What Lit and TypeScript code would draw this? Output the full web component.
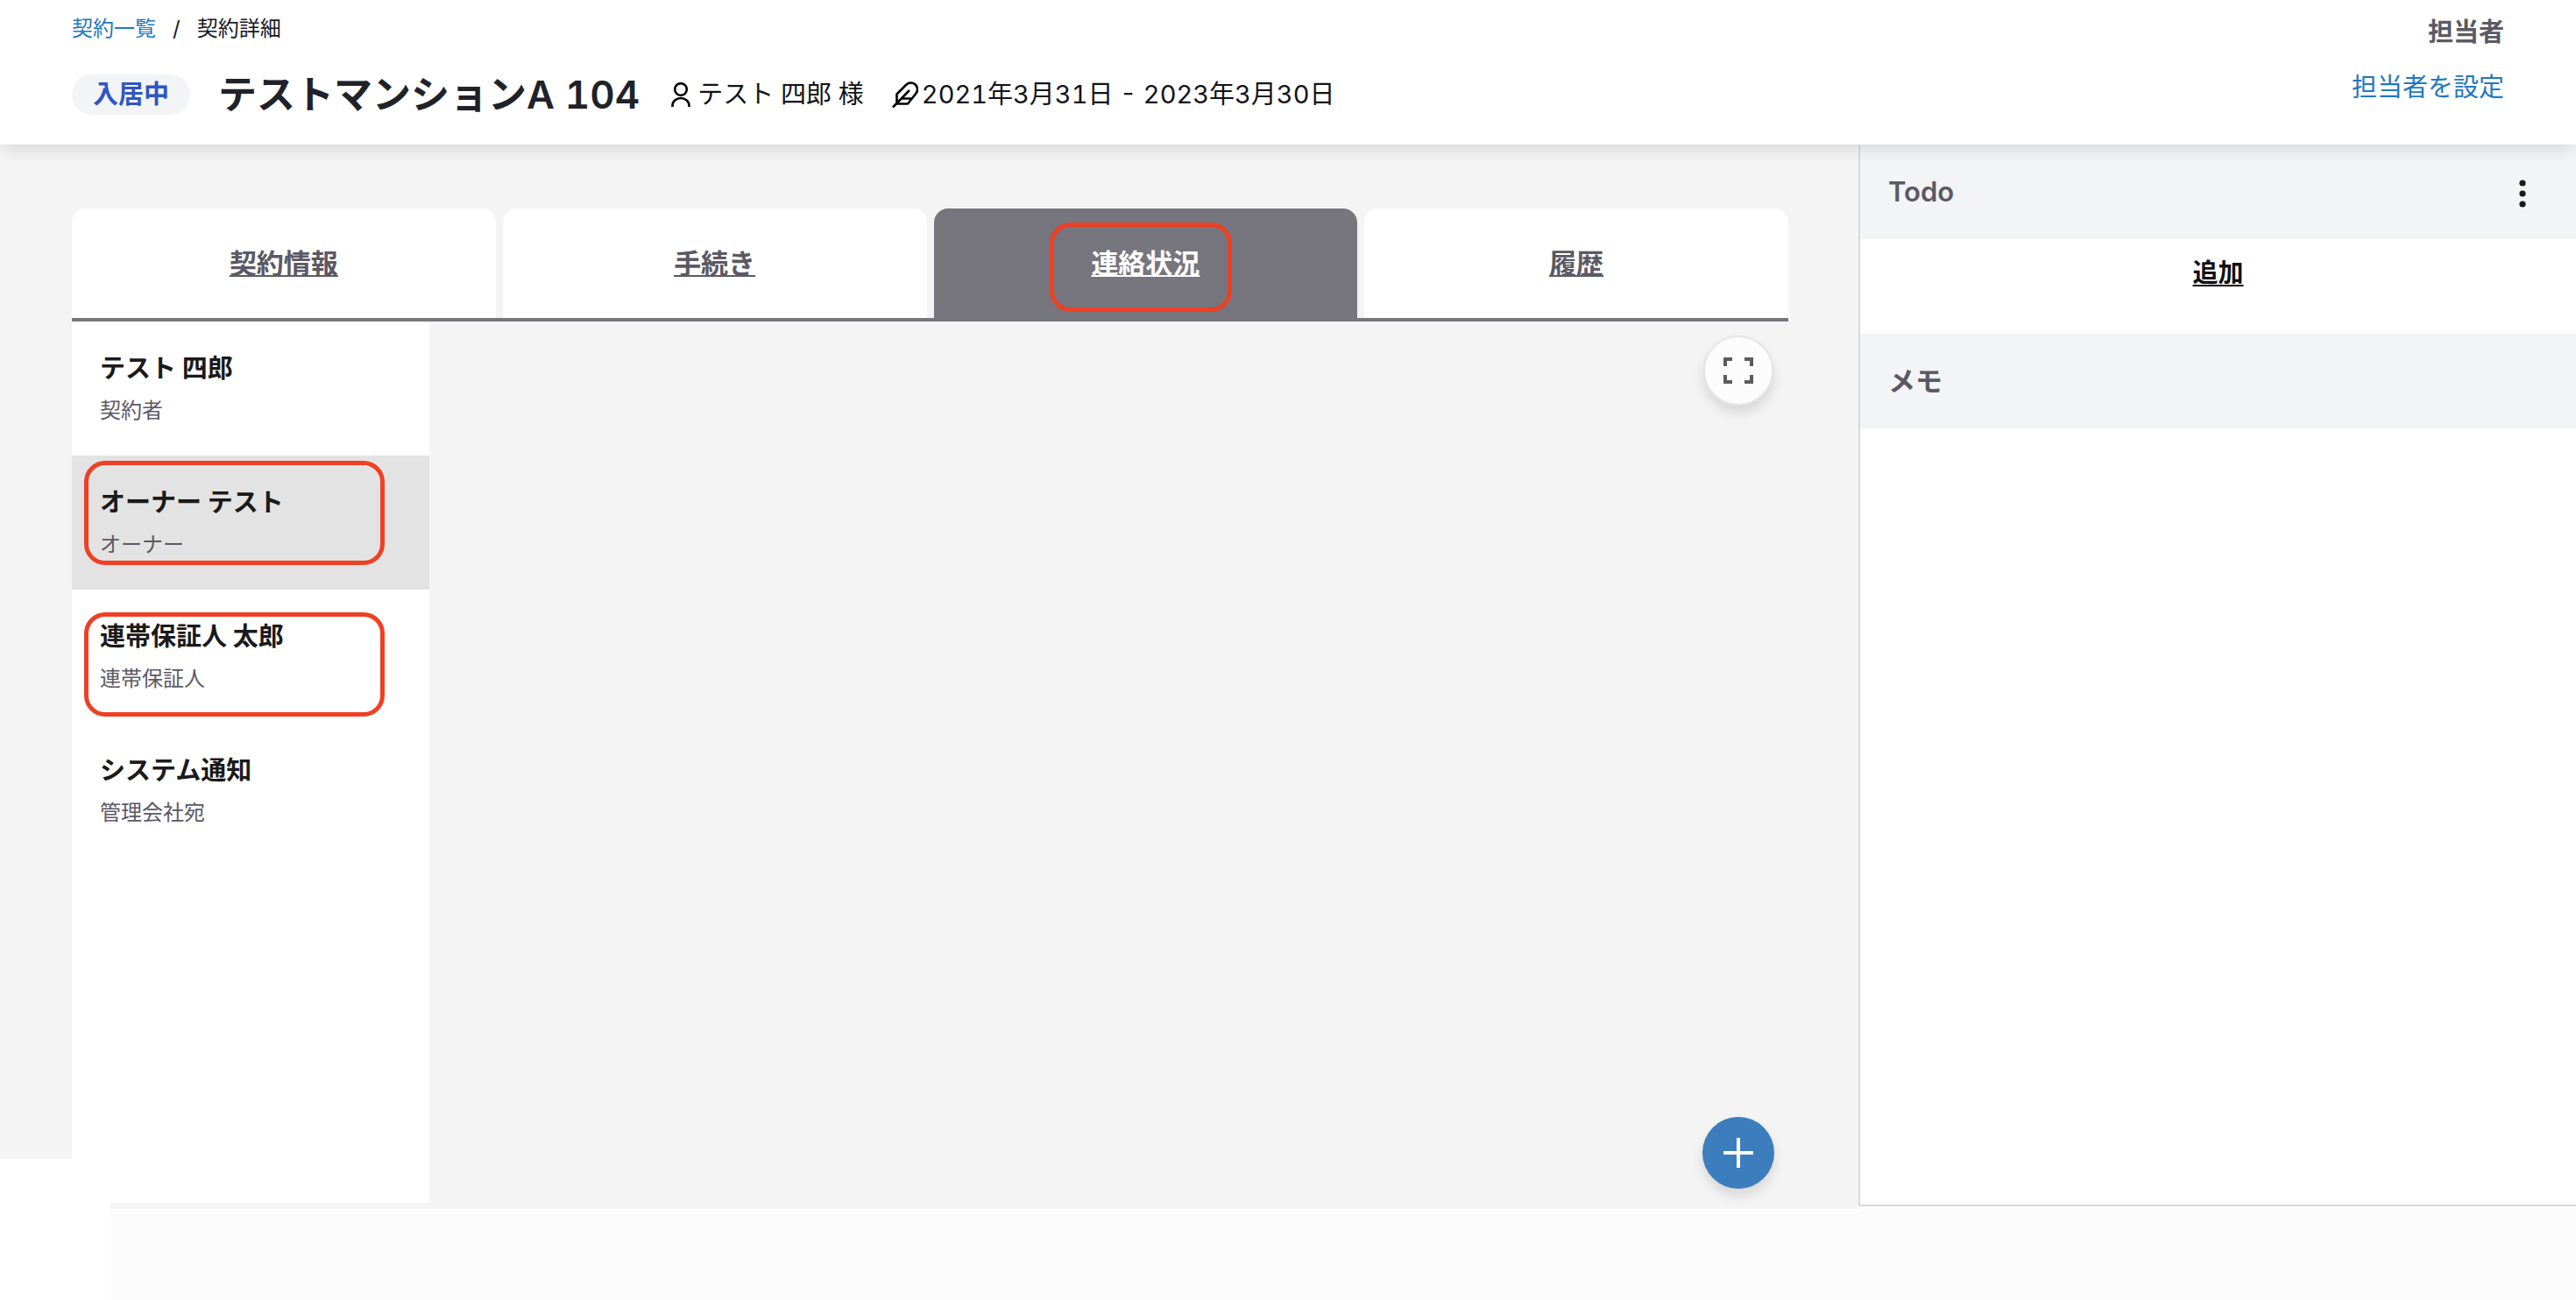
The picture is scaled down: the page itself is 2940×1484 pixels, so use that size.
import { LitElement, html, css, svg } from "lit";
import { customElement, state } from "lit/decorators.js";
import { classMap } from "lit/directives/class-map.js";

interface Contact {
  name: string;
  role: string;
  marked: boolean;
}

const TABS = ["契約情報", "手続き", "連絡状況", "履歴"];

const CONTACTS: Contact[] = [
  { name: "テスト 四郎", role: "契約者", marked: false },
  { name: "オーナー テスト", role: "オーナー", marked: true },
  { name: "連帯保証人 太郎", role: "連帯保証人", marked: true },
  { name: "システム通知", role: "管理会社宛", marked: false },
];

const personIcon = html`<svg class="person" viewBox="0 0 22 28" aria-hidden="true">
  ${svg`<circle cx="11" cy="8" r="6.8"/><path d="M1.5 28v-1.5a9.5 8.5 0 0 1 19 0V28"/>`}
</svg>`;

const featherIcon = html`<svg class="feather" viewBox="0 0 30 30" aria-hidden="true">
  ${svg`<path d="M1 29.500L20 10M5.500 25.500V14.500L16.500 3.500A7.500 7.500 0 0 1 27 14.200L18 25.500H5.500M11 19.500H22"/>`}
</svg>`;

@customElement("app-header")
export class AppHeader extends LitElement {
  static styles = css`
    :host {
      display: block;
    }
    .bar {
      display: flex;
      justify-content: space-between;
      padding: 15px 82px 34px;
      background: #fff;
      box-shadow: 0 4px 20px rgba(0, 0, 0, 0.13);
    }
    .left {
      display: flex;
      flex-direction: column;
      gap: 34px;
    }
    .crumbs {
      display: flex;
      gap: 19px;
      font-size: 24px;
      line-height: 36px;
      color: #16191f;
    }
    a {
      color: #1f78c1;
      text-decoration: none;
    }
    .summary {
      display: flex;
      align-items: center;
      height: 46px;
      font-variant-numeric: tabular-nums;
    }
    .badge {
      padding: 0 24px;
      border-radius: 23px;
      background: #f3f4f6;
      color: #2f55c4;
      font-size: 29px;
      font-weight: 700;
      line-height: 46px;
    }
    h1 {
      margin: 0 36px 0 32px;
      font-size: 44px;
      font-weight: 600;
      line-height: 46px;
      color: #1f2329;
    }
    .meta {
      display: flex;
      align-items: center;
      font-size: 29px;
      line-height: 36px;
      color: #111318;
    }
    .tenant {
      gap: 8px;
      margin-right: 32px;
    }
    .term {
      gap: 4px;
    }
    svg {
      fill: none;
      stroke: #000;
      stroke-width: 2.6;
      stroke-linejoin: round;
    }
    .person {
      width: 22px;
      height: 28px;
    }
    .feather {
      width: 30px;
      height: 30px;
    }
    .staff {
      display: flex;
      flex-direction: column;
      align-items: flex-end;
      gap: 27px;
      padding-top: 4px;
      font-size: 29px;
      line-height: 36px;
    }
    .staff-title {
      font-weight: 700;
      color: #5b5964;
    }
  `;

  render() {
    return html`
      <header class="bar">
        <div class="left">
          <nav class="crumbs">
            <a href="#contracts">契約一覧</a><span>/</span><span>契約詳細</span>
          </nav>
          <div class="summary">
            <span class="badge">入居中</span>
            <h1>テストマンションA 104</h1>
            <span class="meta tenant">${personIcon}<span>テスト 四郎 様</span></span>
            <span class="meta term">${featherIcon}<span>2021年3月31日 - 2023年3月30日</span></span>
          </div>
        </div>
        <div class="staff">
          <span class="staff-title">担当者</span>
          <a href="#assign">担当者を設定</a>
        </div>
      </header>
    `;
  }
}

@customElement("todo-panel")
export class TodoPanel extends LitElement {
  static styles = css`
    :host {
      display: block;
    }
    .head {
      display: flex;
      align-items: center;
      justify-content: space-between;
      height: 108px;
      padding: 0 45px 0 32px;
      background: #f3f4f6;
    }
    h2 {
      margin: 0;
      font-size: 31px;
      font-weight: 600;
      line-height: 42px;
      color: #5b5964;
    }
    button {
      padding: 0;
      border: 0;
      background: none;
      font: inherit;
      cursor: pointer;
    }
    .more {
      width: 32px;
      height: 42px;
    }
    .more svg {
      display: block;
      width: 32px;
      height: 42px;
      fill: #1a1a1a;
    }
    .add-row {
      display: flex;
      justify-content: center;
      align-items: flex-start;
      height: 90px;
      padding-top: 18px;
      background: #fff;
    }
    .add {
      font-size: 29px;
      font-weight: 700;
      line-height: 42px;
      color: #111;
      text-decoration: underline 2px;
      text-underline-offset: 3px;
    }
  `;

  render() {
    return html`
      <section>
        <div class="head">
          <h2>Todo</h2>
          <button class="more" aria-label="メニュー">
            <svg viewBox="0 0 32 42" aria-hidden="true">
              <circle cx="16" cy="11" r="3.6" />
              <circle cx="16" cy="23" r="3.6" />
              <circle cx="16" cy="35" r="3.6" />
            </svg>
          </button>
        </div>
        <div class="add-row"><button class="add">追加</button></div>
      </section>
      <section>
        <div class="head"><h2>メモ</h2></div>
      </section>
    `;
  }
}

@customElement("app-root")
export class AppRoot extends LitElement {
  @state() private tab = 2;
  @state() private contact = 1;

  static styles = css`
    :host {
      display: flex;
      flex-direction: column;
      min-height: 100vh;
      background: #fcfcfc;
      font-family: Inter, "Noto Sans CJK JP", sans-serif;
    }
    * {
      box-sizing: border-box;
    }
    button {
      margin: 0;
      padding: 0;
      border: 0;
      background: none;
      font: inherit;
      cursor: pointer;
    }
    app-header {
      position: relative;
      z-index: 1;
    }
    .body {
      flex: 1;
      display: grid;
      grid-template-columns: minmax(0, 2121fr) minmax(0, 819fr);
    }
    .main {
      display: flex;
      flex-direction: column;
      padding: 73px 80px 0 82px;
      background: #f4f4f4;
    }
    .tabs {
      display: grid;
      grid-template-columns: repeat(4, 1fr);
      gap: 8px;
      border-bottom: 4px solid #77757d;
    }
    .tab {
      display: flex;
      align-items: center;
      justify-content: center;
      height: 125px;
      border-radius: 16px 16px 0 0;
      background: #fff;
      color: #5b5964;
      font-size: 31px;
      font-weight: 700;
      line-height: 42px;
    }
    .tab.active {
      background: #77757d;
      color: #fff;
    }
    .label {
      position: relative;
      text-decoration: underline 2px;
      text-underline-offset: 2px;
    }
    .mark {
      position: absolute;
      border: 5px solid #ee4023;
      border-radius: 24px;
      pointer-events: none;
    }
    .tab .mark {
      inset: -26px -37px -34px -47px;
    }
    .content {
      flex: 1;
      display: flex;
      justify-content: space-between;
    }
    .contacts {
      width: 408px;
      margin: 0 0 7px;
      padding: 0;
      list-style: none;
      background: #fff;
    }
    .contact {
      position: relative;
      display: flex;
      flex-direction: column;
      gap: 9px;
      width: 100%;
      padding: 33px 32px;
      text-align: left;
    }
    .contact.active {
      background: #e3e3e3;
    }
    .contact .mark {
      top: 6px;
      left: 14px;
      width: 343px;
      height: 119px;
    }
    .contact:not(.active) .mark {
      top: 26px;
    }
    .name {
      font-size: 29px;
      font-weight: 700;
      line-height: 42px;
      color: #1a1a1a;
    }
    .role {
      font-size: 24px;
      line-height: 36px;
      color: #5b5964;
    }
    .actions {
      display: flex;
      flex-direction: column;
      align-items: center;
      justify-content: space-between;
      padding: 16px 16px 23px;
    }
    .round {
      display: flex;
      align-items: center;
      justify-content: center;
      border-radius: 50%;
      box-shadow: 0 8px 14px rgba(0, 0, 0, 0.12);
    }
    .round svg {
      width: 36px;
      height: 36px;
      fill: none;
    }
    .expand {
      width: 80px;
      height: 80px;
      border: 2px solid #e6e6e6;
      background: #fcfcfc;
      stroke: #5a5c5e;
      stroke-width: 4;
    }
    .create {
      width: 82px;
      height: 82px;
      background: #3c7dbd;
      stroke: #fff;
      stroke-width: 4;
    }
    .side {
      margin-bottom: 3px;
      border: solid #d9d9d9;
      border-width: 0 0 2px 2px;
      background: #fff;
    }
    .footer {
      position: relative;
      height: 104px;
    }
    .corner {
      position: absolute;
      left: 0;
      bottom: 0;
      width: 126px;
      height: 161px;
      background: #fff;
    }
  `;

  render() {
    return html`
      <app-header></app-header>
      <div class="body">
        <main class="main">
          <div class="tabs" role="tablist">
            ${TABS.map(
              (label, i) => html`
                <button
                  class=${classMap({ tab: true, active: i === this.tab })}
                  role="tab"
                  aria-selected=${i === this.tab}
                  @click=${() => (this.tab = i)}
                >
                  <span class="label"
                    >${label}${i === 2 ? html`<span class="mark"></span>` : ""}</span
                  >
                </button>
              `
            )}
          </div>
          <div class="content">
            <ul class="contacts">
              ${CONTACTS.map(
                (c, i) => html`
                  <li>
                    <button
                      class=${classMap({ contact: true, active: i === this.contact })}
                      @click=${() => (this.contact = i)}
                    >
                      <span class="name">${c.name}</span>
                      <span class="role">${c.role}</span>
                      ${c.marked ? html`<span class="mark"></span>` : ""}
                    </button>
                  </li>
                `
              )}
            </ul>
            <div class="actions">
              <button class="round expand" aria-label="全画面表示">
                <svg viewBox="0 0 36 36" aria-hidden="true">
                  <path d="M3 13V5H11M25 5H33V13M33 23V31H25M11 31H3V23" />
                </svg>
              </button>
              <button class="round create" aria-label="新規作成">
                <svg viewBox="0 0 36 36" aria-hidden="true">
                  <path d="M18 1V35M1 18H35" />
                </svg>
              </button>
            </div>
          </div>
        </main>
        <aside class="side"><todo-panel></todo-panel></aside>
      </div>
      <footer class="footer"><div class="corner"></div></footer>
    `;
  }
}
